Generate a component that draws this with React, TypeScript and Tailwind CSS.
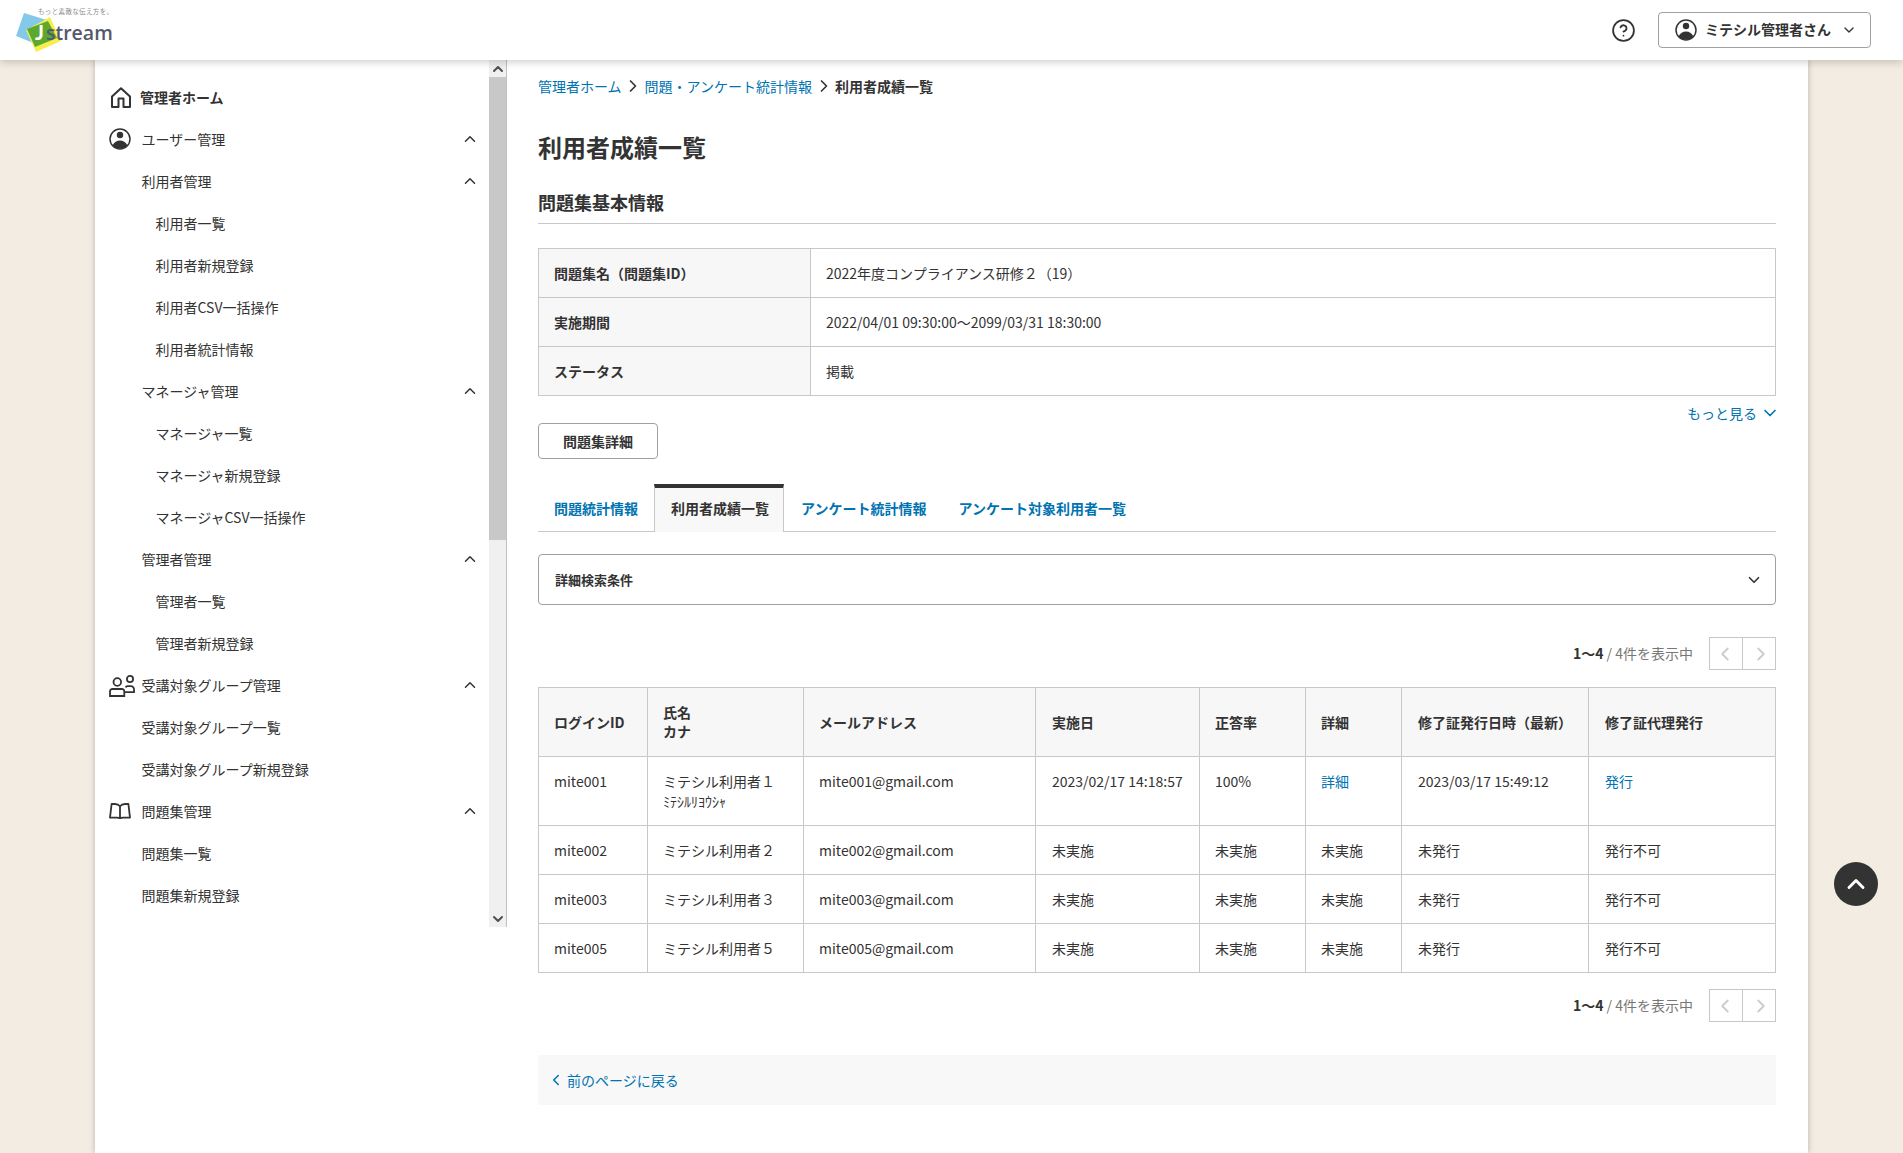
import { ChevronUp, ChevronDown, ChevronLeft, ChevronRight, CircleHelp } from 'lucide-react'
import type { ReactNode } from 'react'

function HomeIcon() {
  return (
    <svg width="22" height="21" viewBox="0 0 22 21" fill="none" stroke="#333" strokeWidth="2" strokeLinejoin="round">
      <path d="M2 20V9.6L11 1.2l9 8.4V20h-6.5v-8.4H8.5V20z" />
    </svg>
  )
}

function UserIcon() {
  return (
    <svg width="22" height="22" viewBox="0 0 22 22" fill="none">
      <circle cx="11" cy="11" r="10" stroke="#333" strokeWidth="1.5" />
      <circle cx="11" cy="7" r="3.2" fill="#333" />
      <path d="M3.6 17.6C5 14 8 12.4 11 12.4s6 1.6 7.4 5.2a10 10 0 0 1-14.8 0z" fill="#333" />
    </svg>
  )
}

function GroupIcon() {
  return (
    <svg width="26" height="23" viewBox="0 0 26 23" fill="none" stroke="#333" strokeWidth="1.8">
      <circle cx="8.3" cy="8" r="3.8" />
      <circle cx="21" cy="5" r="3.1" />
      <path d="M1 22v-4.5a2.5 2.5 0 0 1 2.5-2.5h9.3a2.5 2.5 0 0 1 2.5 2.5V22z" />
      <path d="M16.5 13.4a3 3 0 0 1 2-1.2H22a3 3 0 0 1 3 3v3h-9.7" />
    </svg>
  )
}

function BookIcon() {
  return (
    <svg width="22" height="16" viewBox="0 0 22 16" fill="none" stroke="#333" strokeWidth="1.8" strokeLinejoin="round">
      <path d="M11 3.2C9.8 1.7 8 1 6 1H2.6L1 14.6h7c1.4 0 2.4.2 3 .9.6-.7 1.6-.9 3-.9h7L19.4 1H16c-2 0-3.8.7-5 2.2zM11 3.2V15.5" />
    </svg>
  )
}

function Logo() {
  return (
    <svg width="130" height="60" viewBox="0 0 130 60">
      <polygon points="24,13 50,21 36,44 16,36" fill="#85c9ea" />
      <polygon points="50,17 61,41 36,52 26,30" fill="#f7ee4e" />
      <polygon points="27,29 48,21 57,38 35,47" fill="#5ca92e" />
      <text x="38" y="14" fontSize="6.5" fill="#8a8a8a" letterSpacing="0.35" fontFamily="'Noto Sans CJK JP', sans-serif">もっと素敵な伝え方を。</text>
      <text x="35" y="40" fontSize="21" fontWeight="700" fill="#ffffff" fontFamily="Lato, sans-serif">J</text>
      <text x="46" y="40" fontSize="19.5" fontWeight="600" fill="#55586a" fontFamily="'Open Sans', sans-serif">stream</text>
    </svg>
  )
}

type NavItem = { label: string; level: 1 | 2 | 3; icon?: ReactNode; open?: boolean; bold?: boolean }

const navItems: NavItem[] = [
  { label: '管理者ホーム', level: 1, icon: <HomeIcon />, bold: true },
  { label: 'ユーザー管理', level: 1, icon: <UserIcon />, open: true },
  { label: '利用者管理', level: 2, open: true },
  { label: '利用者一覧', level: 3 },
  { label: '利用者新規登録', level: 3 },
  { label: '利用者CSV一括操作', level: 3 },
  { label: '利用者統計情報', level: 3 },
  { label: 'マネージャ管理', level: 2, open: true },
  { label: 'マネージャ一覧', level: 3 },
  { label: 'マネージャ新規登録', level: 3 },
  { label: 'マネージャCSV一括操作', level: 3 },
  { label: '管理者管理', level: 2, open: true },
  { label: '管理者一覧', level: 3 },
  { label: '管理者新規登録', level: 3 },
  { label: '受講対象グループ管理', level: 1, icon: <GroupIcon />, open: true },
  { label: '受講対象グループ一覧', level: 2 },
  { label: '受講対象グループ新規登録', level: 2 },
  { label: '問題集管理', level: 1, icon: <BookIcon />, open: true },
  { label: '問題集一覧', level: 2 },
  { label: '問題集新規登録', level: 2 },
]

function Sidebar() {
  return (
    <aside className="flex h-[867px] w-[412px] shrink-0">
      <nav className="flex-1 overflow-hidden pt-4 pl-[14px] pr-[10px]">
        {navItems.map((item) => (
          <div key={item.label} className="flex h-[42px] items-center">
            {item.level === 1 && (
              <span className={`flex shrink-0 items-center ${item.bold ? 'w-[31px] pl-[1px]' : 'w-[32.5px]'}`}>{item.icon}</span>
            )}
            {item.level === 2 && <span className="w-[32.5px] shrink-0" />}
            {item.level === 3 && <span className="w-[46.5px] shrink-0" />}
            <span className={item.bold ? 'font-bold' : ''}>{item.label}</span>
            {item.open && <ChevronUp size={18} strokeWidth={2} className="ml-auto" />}
          </div>
        ))}
      </nav>
      <div className="flex w-[18px] shrink-0 flex-col border-r border-[#c0c0c0] bg-[#f0f0f0]">
        <div className="flex h-[17px] items-center justify-center">
          <ChevronUp size={16} strokeWidth={3} className="text-[#505050]" />
        </div>
        <div className="h-[463px] bg-[#c8c8c8]" />
        <div className="flex-1" />
        <div className="flex h-[17px] items-center justify-center">
          <ChevronDown size={16} strokeWidth={3} className="text-[#505050]" />
        </div>
      </div>
    </aside>
  )
}

function Pager() {
  return (
    <div className="flex items-center justify-end">
      <span className="mr-[16px] text-[#777]">
        <b className="font-bold text-[#333]">1〜4</b> / 4件を表示中
      </span>
      <div className="flex h-[33px] border border-[#c8c8c8] text-[#ccc]">
        <span className="flex w-[33px] items-center justify-center border-r border-[#c8c8c8] pr-[2px]">
          <ChevronLeft size={22} strokeWidth={2} />
        </span>
        <span className="flex w-[32px] items-center justify-center pl-[3px]">
          <ChevronRight size={22} strokeWidth={2} />
        </span>
      </div>
    </div>
  )
}

const infoRows = [
  ['問題集名（問題集ID）', '2022年度コンプライアンス研修２（19）'],
  ['実施期間', '2022/04/01 09:30:00～2099/03/31 18:30:00'],
  ['ステータス', '掲載'],
]

const scoreRows = [
  ['mite002', 'ミテシル利用者２', 'mite002@gmail.com'],
  ['mite003', 'ミテシル利用者３', 'mite003@gmail.com'],
  ['mite005', 'ミテシル利用者５', 'mite005@gmail.com'],
]

const tabs = ['問題統計情報', '利用者成績一覧', 'アンケート統計情報', 'アンケート対象利用者一覧']

const cell = 'border border-[#c8c8c8] px-[15px]'
const wide = 'border border-[#c8c8c8] pr-[14px] pl-[16px]'

export default function App() {
  return (
    <div className="relative flex min-h-screen flex-col overflow-hidden bg-[#f3ece2] font-['Noto_Sans_CJK_JP','Noto_Sans',sans-serif] text-[14px] text-[#333]">
      <header className="relative z-10 flex h-[60px] shrink-0 items-center justify-between bg-white pr-[32px] shadow-[0_2px_8px_rgba(0,0,0,0.2)]">
        <Logo />
        <div className="flex items-center gap-[22px]">
          <CircleHelp size={25} strokeWidth={1.7} />
          <button className="flex h-[36px] w-[213px] items-center rounded-[4px] border border-[#a0a0a0] pl-[16px] font-bold">
            <UserIcon />
            <span className="mb-[2px] ml-[8px]">ミテシル管理者さん</span>
            <ChevronDown size={16} className="ml-[10px]" />
          </button>
        </div>
      </header>

      <div className="ml-[95px] flex w-[1713px] flex-1 bg-white shadow-[0_0_6px_rgba(0,0,0,0.25)]">
        <Sidebar />
        <main className="ml-[31px] w-[1238px] pt-[16px]">
          <div className="flex h-[20px] items-center">
            <a className="text-[#0073b1]">管理者ホーム</a>
            <ChevronRight size={20} strokeWidth={2} className="mx-[1.5px]" />
            <a className="text-[#0073b1]">問題・アンケート統計情報</a>
            <ChevronRight size={20} strokeWidth={2} className="mx-[1.5px]" />
            <span className="font-bold">利用者成績一覧</span>
          </div>

          <h1 className="mt-[33px] text-[24px] leading-[36px] font-bold">利用者成績一覧</h1>
          <h2 className="mt-[22px] h-[37px] border-b border-[#c8c8c8] text-[18px] leading-[30px] font-bold">問題集基本情報</h2>

          <table className="mt-[24px] w-full table-fixed border-collapse">
            <colgroup>
              <col className="w-[272px]" />
              <col />
            </colgroup>
            <tbody>
              {infoRows.map(([k, v]) => (
                <tr key={k} className="h-[49px]">
                  <th className={`${cell} bg-[#f7f7f7] text-left font-bold`}>{k}</th>
                  <td className={cell}>{v}</td>
                </tr>
              ))}
            </tbody>
          </table>

          <div className="mt-[7px] flex h-[20px] items-center justify-end text-[#0073b1]">
            もっと見る
            <ChevronDown size={20} strokeWidth={2} className="-mr-[4px] ml-[3px]" />
          </div>

          <button className="h-[36px] w-[120px] rounded-[4px] border border-[#a0a0a0] pt-[1px] font-bold">問題集詳細</button>

          <div className="mt-[25px] flex h-[48px] border-b border-[#c8c8c8] font-bold text-[#0073b1]">
            {tabs.map((t, i) =>
              i === 1 ? (
                <div key={t} className="h-[48px] border-x border-t-4 border-x-[#c8c8c8] border-t-[#333] bg-[#f8f8f8] pt-[10px] pr-[14px] pl-[16px] text-[#333]">
                  {t}
                </div>
              ) : (
                <div key={t} className={`pt-[14px] pr-4 ${i === 2 ? 'pl-[17px]' : 'pl-4'}`}>
                  {t}
                </div>
              ),
            )}
          </div>

          <div className="mt-[22px] flex h-[51px] items-center justify-between rounded-[4px] border border-[#a0a0a0] pr-[12px] pl-[16px] text-[13px] font-bold">
            詳細検索条件
            <ChevronDown size={18} strokeWidth={2.2} />
          </div>

          <div className="mt-[32px]">
            <Pager />
          </div>

          <table className="mt-[17px] w-[1237px] table-fixed border-collapse">
            <colgroup>
              <col className="w-[109px]" />
              <col className="w-[156px]" />
              <col className="w-[232px]" />
              <col className="w-[164px]" />
              <col className="w-[106px]" />
              <col className="w-[96px]" />
              <col className="w-[187px]" />
              <col className="w-[187px]" />
            </colgroup>
            <thead>
              <tr className="h-[69px] bg-[#f7f7f7] text-left font-bold">
                <th className={cell}>ログインID</th>
                <th className={`${cell} leading-[19px]`}>
                  氏名
                  <br />
                  カナ
                </th>
                <th className={cell}>メールアドレス</th>
                <th className={wide}>実施日</th>
                <th className={cell}>正答率</th>
                <th className={cell}>詳細</th>
                <th className={wide}>修了証発行日時（最新）</th>
                <th className={wide}>修了証代理発行</th>
              </tr>
            </thead>
            <tbody>
              <tr className="h-[69px] align-top">
                <td className={`${cell} pt-[14px]`}>mite001</td>
                <td className={`${cell} pt-[14px]`}>
                  <div className="leading-[20px]">ミテシル利用者１</div>
                  <div className="leading-[21px]">ﾐﾃｼﾙﾘﾖｳｼｬ</div>
                </td>
                <td className={`${cell} pt-[14px]`}>mite001@gmail.com</td>
                <td className={`${wide} pt-[14px]`}>2023/02/17 14:18:57</td>
                <td className={`${cell} pt-[14px]`}>100%</td>
                <td className={`${cell} pt-[14px] text-[#0073b1]`}>詳細</td>
                <td className={`${wide} pt-[14px]`}>2023/03/17 15:49:12</td>
                <td className={`${wide} pt-[14px] text-[#0073b1]`}>発行</td>
              </tr>
              {scoreRows.map(([id, name, mail]) => (
                <tr key={id} className="h-[49px]">
                  <td className={cell}>{id}</td>
                  <td className={cell}>{name}</td>
                  <td className={cell}>{mail}</td>
                  <td className={wide}>未実施</td>
                  <td className={cell}>未実施</td>
                  <td className={cell}>未実施</td>
                  <td className={wide}>未発行</td>
                  <td className={wide}>発行不可</td>
                </tr>
              ))}
            </tbody>
          </table>

          <div className="mt-[16px]">
            <Pager />
          </div>

          <div className="mt-[33px] flex h-[50px] items-center bg-[#f8f8f8] pl-[9px] text-[#0073b1]">
            <ChevronLeft size={18} strokeWidth={2} className="mr-[2px]" />
            前のページに戻る
          </div>
        </main>
      </div>

      <button className="absolute top-[862px] right-[25px] z-20 flex h-[44px] w-[44px] items-center justify-center rounded-full bg-[#333] text-white">
        <ChevronUp size={28} strokeWidth={2.5} />
      </button>
    </div>
  )
}
